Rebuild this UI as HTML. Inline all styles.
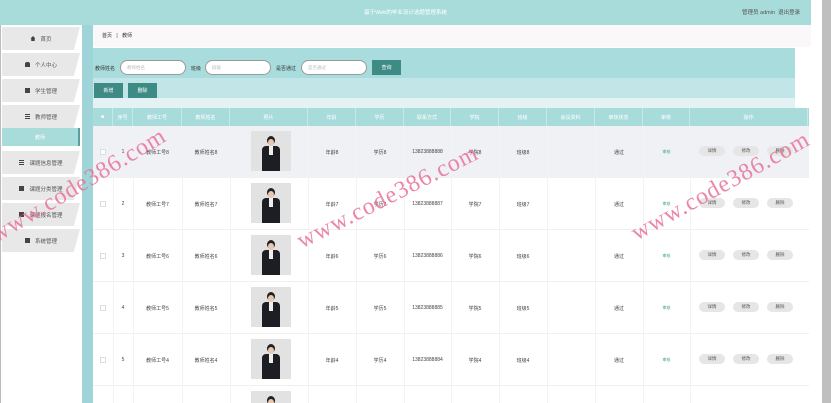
<!DOCTYPE html>
<html style="width:831px;height:403px;overflow:hidden"><head><meta charset="utf-8"><style>
*{margin:0;padding:0;box-sizing:border-box}
body{width:831px;height:403px;overflow:hidden;background:#fff;font-family:"Liberation Sans","Noto Sans CJK SC",sans-serif;font-size:5px;color:#555;position:relative}
.a{position:absolute}
.hdr{left:0;top:0;width:811px;height:25px;background:#a8dcdb;box-shadow:0 2px 3px rgba(0,0,0,.08)}
.sb{left:0;top:25px;width:82px;height:378px;background:#fff;border-left:1px solid #bbb}
.strip{left:82px;top:25px;width:11px;height:378px;background:#9fd5d8}
.mi{position:absolute;left:2px;width:78px;height:23px;background:#e8e8e8;font-size:5.5px;color:#555;display:flex;align-items:center;justify-content:center;clip-path:polygon(0 0,100% 0,92% 100%,0 100%)}
.mi b{display:inline-block;width:5px;height:5px;background:#444;margin-right:5px}
.td{position:absolute;display:flex;align-items:center;justify-content:center;font-size:5px;color:#444}
.btn{position:absolute;width:26px;height:10px;border-radius:5px;background:#e6e6e6;font-size:4.5px;color:#555;display:flex;align-items:center;justify-content:center}
.wm{position:absolute;color:#e8739a;font-family:"Liberation Serif",serif;font-size:24px;letter-spacing:1px;transform-origin:left bottom;opacity:.85;white-space:nowrap}
.ph{position:absolute;width:40px;height:40px;background:#e2e2e2;overflow:hidden}
.ph .h{position:absolute;left:16px;top:5px;width:8px;height:9px;border-radius:50%;background:#222}
.ph .f{position:absolute;left:17px;top:8px;width:6px;height:7px;border-radius:50%;background:#e8c8b0}
.ph .s{position:absolute;left:11px;top:15px;width:18px;height:25px;background:#1d1d24;border-radius:4px 4px 0 0}
.ph .w{position:absolute;left:18px;top:15px;width:4px;height:9px;background:#eee}
#t{position:absolute;left:0;top:0;width:831px;height:403px;overflow:hidden}
</style></head><body>
<div class="a hdr"></div>
<div class="a" style="left:0;top:8px;width:811px;text-align:center;color:#fff;font-size:5.5px">基于Web的毕业设计选题管理系统</div>
<div class="a" style="left:742px;top:8px;color:#555;font-size:5.5px">管理员 admin &nbsp;退出登录</div>

<div class="a sb"></div>
<div class="a strip"></div>
<div class="mi" style="top:27px"><b style="clip-path:polygon(50% 0,100% 50%,85% 50%,85% 100%,15% 100%,15% 50%,0 50%)"></b>首页</div>
<div class="mi" style="top:53px"><b style="border-radius:2px 2px 0 0"></b>个人中心</div>
<div class="mi" style="top:79px"><b></b>学生管理</div>
<div class="mi" style="top:105px"><b style="background:repeating-linear-gradient(#444 0 1px,#e8e8e8 1px 2px)"></b>教师管理</div>
<div class="a" style="left:2px;top:128px;width:78px;height:18px;background:#a8dcdb;border-right:2px solid #5a9ea0;color:#fff;font-size:5px;display:flex;align-items:center;justify-content:center">教师</div>
<div class="mi" style="top:151px"><b style="background:repeating-linear-gradient(#444 0 1px,#e8e8e8 1px 2px)"></b>课题信息管理</div>
<div class="mi" style="top:177px"><b></b>课题分类管理</div>
<div class="mi" style="top:203px"><b></b>课题报名管理</div>
<div class="mi" style="top:229px"><b></b>系统管理</div>

<div class="a" style="left:93px;top:25px;width:718px;height:22px;background:#fbf8fa"></div>
<div class="a" style="left:102px;top:32px;font-size:5px;color:#333">首页 <span style="margin:0 3px">|</span> 教师</div>
<div class="a" style="left:93px;top:48px;width:702px;height:30px;background:#a9dcdc"></div>
<div class="a" style="left:93px;top:78px;width:702px;height:20px;background:#c2e6e8"></div>
<div class="a" style="left:93px;top:98px;width:702px;height:10px;background:#e4f2f3"></div>
<div class="a" style="left:95px;top:65px;font-size:5px;color:#333">教师姓名</div>
<div class="a" style="left:120px;top:60px;width:66px;height:15px;border:1px solid #999;border-radius:8px;background:#fff;font-size:4.5px;color:#bbb;padding:4px 6px">教师姓名</div>
<div class="a" style="left:191px;top:65px;font-size:5px;color:#333">班级</div>
<div class="a" style="left:205px;top:60px;width:66px;height:15px;border:1px solid #999;border-radius:8px;background:#fff;font-size:4.5px;color:#bbb;padding:4px 6px">班级</div>
<div class="a" style="left:276px;top:65px;font-size:5px;color:#333">是否通过</div>
<div class="a" style="left:301px;top:60px;width:66px;height:15px;border:1px solid #999;border-radius:8px;background:#fff;font-size:4.5px;color:#bbb;padding:4px 6px">是否通过</div>
<div class="a" style="left:372px;top:60px;width:29px;height:15px;background:#3e8a85;color:#fff;font-size:5px;display:flex;align-items:center;justify-content:center">查询</div>
<div class="a" style="left:94px;top:83px;width:29px;height:15px;background:#3e8a85;color:#fff;font-size:5px;display:flex;align-items:center;justify-content:center">新增</div>
<div class="a" style="left:128px;top:83px;width:29px;height:15px;background:#3e8a85;color:#fff;font-size:5px;display:flex;align-items:center;justify-content:center">删除</div>

<div class="a" style="left:93px;top:108px;width:716px;height:18px;background:#a8dcdb"></div>
<div class="a" style="left:93px;top:126px;width:716px;height:52px;background:#f0f1f5"></div>
<div class="a" style="left:93px;top:178px;width:716px;height:225px;background:#fff"></div>
<div id="t"></div>
<div class="a" style="left:811px;top:0;width:11px;height:403px;background:#fff"></div>
<div class="a" style="left:822px;top:0;width:9px;height:403px;background:#bfbfbf"></div>
<script>
var cols=[93,113,133,182,230,308,356,404,451,499,547,595,643,690,808];
var hd=["■","序号","教师工号","教师姓名","照片","年龄","学历","联系方式","学院","班级","会议资料","审核状态","审核","操作"];
var h="";
for(var i=0;i<14;i++){h+='<div class="td" style="left:'+cols[i]+'px;top:108px;width:'+(cols[i+1]-cols[i])+'px;height:18px;color:#fff;border-right:1px solid rgba(255,255,255,.35)">'+hd[i]+'</div>';}
for(var r=0;r<6;r++){var y=126+r*52,n=8-r;
 h+='<div class="a" style="left:93px;top:'+(y+51)+'px;width:716px;height:1px;background:#eef0f2"></div>';
 for(var i=1;i<14;i++)h+='<div class="a" style="left:'+cols[i]+'px;top:'+y+'px;width:1px;height:52px;background:#f2f3f5"></div>';
 h+='<div class="a" style="left:251px;top:'+(y+5)+'px"><div class="ph"><div class="h"></div><div class="f"></div><div class="s"></div><div class="w"></div></div></div>';
 if(r==5)continue;
 var v=["",""+(r+1),"教师工号"+n,"教师姓名"+n,"","年龄"+n,"学历"+n,"1382388888"+n,"学院"+n,"班级"+n,"","通过",""];
 h+='<div class="a" style="left:100px;top:'+(y+23)+'px;width:6px;height:6px;border:1px solid #ddd;background:#fff"></div>';
 for(var i=1;i<13;i++)if(v[i])h+='<div class="td" style="left:'+cols[i]+'px;top:'+y+'px;width:'+(cols[i+1]-cols[i])+'px;height:52px">'+v[i]+'</div>';
 h+='<div class="td" style="left:643px;top:'+y+'px;width:47px;height:52px;color:#3aa870;font-size:4px">审核</div>';
 var bx=[699,733,767],bt=["详情","修改","删除"];
 for(var k=0;k<3;k++)h+='<div class="btn" style="left:'+bx[k]+'px;top:'+(y+20)+'px">'+bt[k]+'</div>';
}
document.getElementById('t').innerHTML=h;
</script>
<div class="wm" style="left:0;top:222px;transform:rotate(-31deg)">www.code386.com</div>
<div class="wm" style="left:305px;top:228px;transform:rotate(-27deg)">www.code386.com</div>
<div class="wm" style="left:640px;top:220px;transform:rotate(-29deg)">www.code386.com</div>
</body></html>
